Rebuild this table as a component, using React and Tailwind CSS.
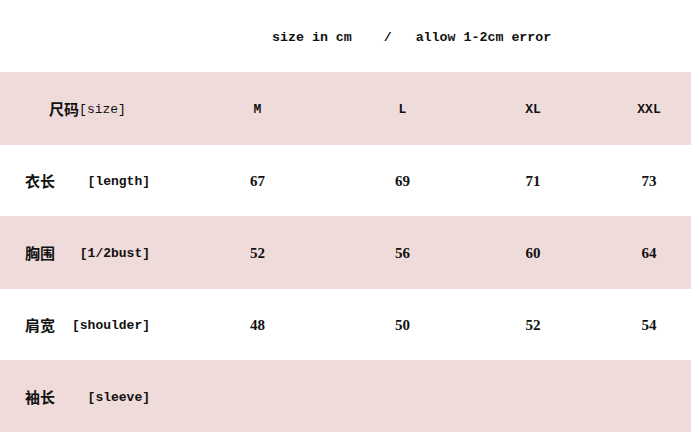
const mono = "font-['Liberation_Mono',monospace]"
const cjk = "font-['Noto_Sans_CJK_SC',sans-serif]"
const num = "font-['Liberation_Serif',serif]"

const cols = 'grid grid-cols-[185px_145px_145px_116px_1fr] items-center pt-[2px]'
const sizes = ['M', 'L', 'XL', 'XXL']

const rows = [
  { zh: '衣长', en: '[length]', vals: ['67', '69', '71', '73'] },
  { zh: '胸围', en: '[1/2bust]', vals: ['52', '56', '60', '64'] },
  { zh: '肩宽', en: '[shoulder]', vals: ['48', '50', '52', '54'] },
  { zh: '袖长', en: '[sleeve]', vals: [] },
]

function Cell({ i, children, cls = '' }) {
  return <div className={`text-center ${i === 3 ? 'pl-4' : ''} ${cls}`}>{children}</div>
}

export default function App() {
  return (
    <div className="w-[691px] h-[432px] bg-white text-[#111] overflow-hidden">
      <div className="h-[72px] flex items-center pt-[3px]">
        <div className={`${mono} pl-[272px] text-[13.3px] font-bold whitespace-pre`}>size in cm    /   allow 1-2cm error</div>
      </div>

      <div className={`${cols} h-[73px] bg-[#f0dbdb]`}>
        <div className="flex justify-center pl-[25px] pr-[35px] items-center">
          <span className={`${cjk} text-[15px] font-bold`}>尺码</span>
          <span className={`${mono} text-[13px]`}>[size]</span>
        </div>
        {sizes.map((s, i) => (
          <Cell key={s} i={i} cls={`${mono} text-[13px] font-bold`}>{s}</Cell>
        ))}
      </div>

      {rows.map((r, ri) => (
        <div key={r.zh} className={`${cols} ${ri % 2 ? 'bg-[#f0dbdb] h-[73px]' : 'bg-white h-[71px]'} ${ri === 3 ? 'h-[72px]' : ''}`}>
          <div className="flex justify-between items-center pl-[25px] pr-[35px]">
            <span className={`${cjk} text-[15px] font-bold`}>{r.zh}</span>
            <span className={`${mono} text-[13px] font-bold`}>{r.en}</span>
          </div>
          {sizes.map((s, i) => (
            <Cell key={s} i={i} cls={`${num} text-[15px] font-bold`}>{r.vals[i]}</Cell>
          ))}
        </div>
      ))}
    </div>
  )
}
